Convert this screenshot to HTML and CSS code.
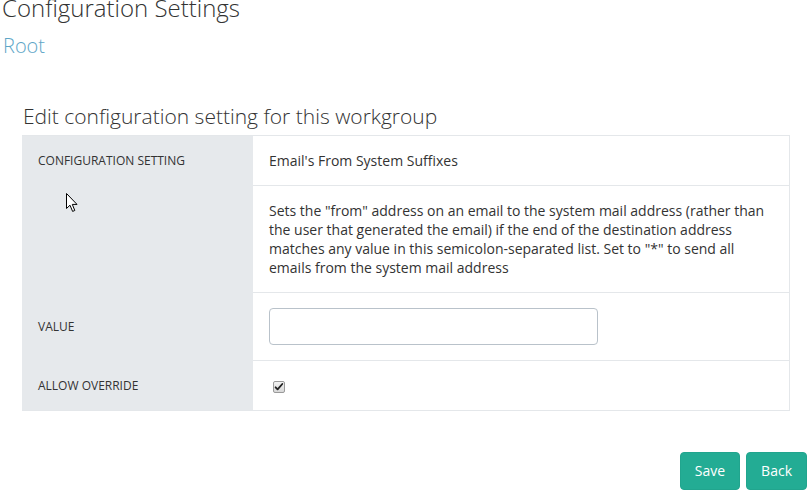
FILE: index.html
```html
<!DOCTYPE html>
<html lang="en">
  <head>
    <meta charset="UTF-8" />
    <meta name="viewport" content="width=device-width, initial-scale=1.0" />
    <title>Configuration Settings</title>
    <link rel="stylesheet" href="styles.css">
  </head>
  <body>
    <div class="page">
      <h1 class="page-title">Configuration Settings</h1>
      <div class="crumb">Root</div>

      <div class="panel">
        <h2 class="panel-title">Edit configuration setting for this workgroup</h2>
        <table class="settings">
          <tr>
            <th>Configuration Setting</th>
            <td>Email's From System Suffixes</td>
          </tr>
          <tr>
            <th class="pointer-cell">
              <!-- mouse pointer -->
              <svg class="pointer" width="13" height="20" viewBox="0 0 13 20">
                <path d="M0.5 0.5 L0.5 15.5 L4 12.2 L6.6 18.4 L8.8 17.5 L6.3 11.4 L11 11.4 Z" fill="#fff" stroke="#000" stroke-width="1" stroke-linejoin="miter" />
              </svg>
            </th>
            <td class="desc">Sets the "from" address on an email to the system mail address (rather than the user that generated the email) if the end of the destination address matches any value in this semicolon-separated list. Set to "*" to send all emails from the system mail address</td>
          </tr>
          <tr>
            <th>Value</th>
            <td><input type="text" class="text-input" /></td>
          </tr>
          <tr>
            <th>Allow Override</th>
            <td>
              <span class="check">
                <svg width="12" height="12" viewBox="0 0 12 12">
                  <defs>
                    <linearGradient id="boxFill" x1="0" y1="0" x2="0" y2="1">
                      <stop offset="0" stop-color="#f4f4f4" />
                      <stop offset="1" stop-color="#d6d6d6" />
                    </linearGradient>
                  </defs>
                  <rect x="0.5" y="0.5" width="11" height="11" rx="1.5" fill="url(#boxFill)" stroke="#9a9a9a" />
                  <path d="M2.6 6.3 L4.6 8.4 L9.3 3" fill="none" stroke="#222" stroke-width="1.8" stroke-linecap="round" stroke-linejoin="round" />
                </svg>
              </span>
            </td>
          </tr>
        </table>
      </div>

      <div class="actions">
        <button class="btn">Save</button>
        <button class="btn">Back</button>
      </div>
    </div>
  </body>
</html>
```

FILE: styles.css
```css
body {
  margin: 0;
  font-family: "Open Sans", "Liberation Sans", sans-serif;
  font-size: 14px;
  line-height: 19px;
  color: #333;
  background-color: #fff;
}
.page {
  padding: 0 5px 0 2px;
}
.page-title {
  margin: -5px 0 0 0;
  font-size: 24px;
  line-height: 26px;
  font-weight: 300;
  color: #333;
}
.crumb {
  margin-top: 14px;
  padding-left: 1px;
  font-size: 20px;
  line-height: 22px;
  font-weight: 300;
  color: #5ea6c7;
}
.panel {
  margin: 48px 17px 0 20px;
}
.panel-title {
  margin: 0 0 7px 1px;
  font-size: 21px;
  line-height: 23px;
  font-weight: 300;
  color: #333;
}
.settings {
  width: 100%;
  border-collapse: separate;
  border-spacing: 0;
  border: 1px solid #e4e7ea;
  border-left: none;
}
.settings th,
.settings td {
  padding: 15px 16px;
  text-align: left;
  vertical-align: middle;
}
.settings th {
  width: 199px;
  background-color: #e6e9ec;
  font-size: 12px;
  font-weight: 400;
  text-transform: uppercase;
  color: #333;
}
.settings td {
  border-top: 1px solid #e4e7ea;
}
.settings tr:first-child td {
  border-top: none;
}
.pointer-cell {
  position: relative;
}
.pointer {
  position: absolute;
  left: 44px;
  top: 8px;
}
.text-input {
  display: block;
  box-sizing: border-box;
  width: 329px;
  height: 37px;
  margin: 0;
  padding: 6px 10px;
  border: 1px solid #b9c2ca;
  border-radius: 4px;
  font-family: inherit;
  font-size: 14px;
}
.check {
  display: inline-block;
  margin-left: 4px;
  vertical-align: middle;
}
.check svg {
  display: block;
}
.actions {
  display: flex;
  justify-content: flex-end;
  gap: 6px;
  margin-top: 41px;
}
.btn {
  padding: 8px 14px;
  font-family: inherit;
  font-size: 14px;
  line-height: 20px;
  color: #fff;
  background-color: #23ac94;
  border: 1px solid #21a58e;
  border-radius: 4px;
  cursor: pointer;
}
```
